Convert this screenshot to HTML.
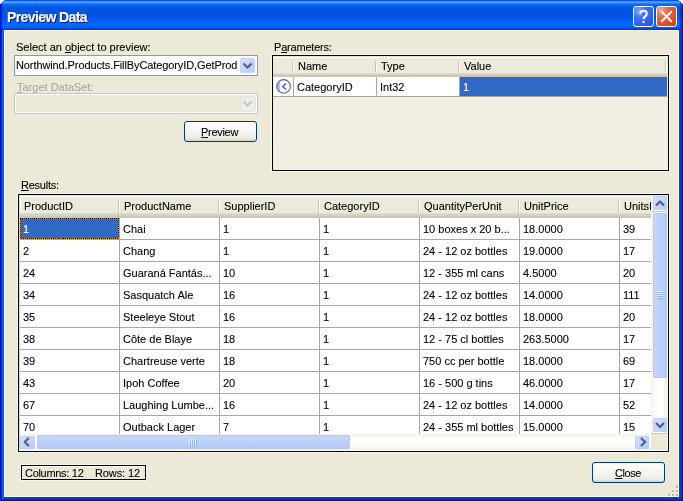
<!DOCTYPE html>
<html><head><meta charset="utf-8"><style>
html,body{margin:0;padding:0;}
body{width:683px;height:501px;overflow:hidden;background:#fff;position:relative;font-family:"Liberation Sans", sans-serif;font-size:11px;color:#000;}
.t{position:absolute;white-space:nowrap;will-change:transform;-webkit-text-stroke:0.1px currentColor;font-family:"Liberation Sans", sans-serif;font-size:11px;}
.u{text-decoration:underline;text-underline-offset:1px;}
</style></head><body>

<div style="position:absolute;left:0px;top:0px;width:683px;height:501px;border-radius:7px 7px 0 0;overflow:hidden;background:#0040E0;"></div>
<div style="position:absolute;left:0px;top:0px;width:683px;height:30px;border-radius:7px 7px 0 0;background:linear-gradient(to bottom,#0A52E6 0px, #0A52E6 1px,#3A8DFF 1px, #3A8DFF 2px,#4FA0FF 2px, #4FA0FF 3px,#1E7DFF 3px, #1E7DFF 4px,#0A6DF8 4px, #0A6DF8 5px,#0664F0 5px, #0664F0 6px,#035DE8 6px, #035DE8 7px,#0057E2 7px, #0057E2 8px,#0055E0 8px, #0055E0 9px,#0055E0 9px, #0055E0 10px,#0054DF 10px, #0054DF 11px,#0054DF 11px, #0054DF 12px,#0054DF 12px, #0054DF 13px,#0054DF 13px, #0054DF 14px,#0054DF 14px, #0054DF 15px,#0055E0 15px, #0055E0 16px,#0056E4 16px, #0056E4 17px,#0057E8 17px, #0057E8 18px,#0058EA 18px, #0058EA 19px,#005CF0 19px, #005CF0 20px,#0060F5 20px, #0060F5 21px,#0064FA 21px, #0064FA 22px,#0066FF 22px, #0066FF 23px,#0066FF 23px, #0066FF 24px,#0067FF 24px, #0067FF 25px,#0066FF 25px, #0066FF 26px,#0064FC 26px, #0064FC 27px,#005EF5 27px, #005EF5 28px,#0048E0 28px, #0048E0 29px,#003CCC 29px, #003CCC 30px);"></div>
<div style="position:absolute;left:0px;top:30px;width:1px;height:471px;background:#0012CF;"></div>
<div style="position:absolute;left:1px;top:30px;width:1px;height:471px;background:#001CD8;"></div>
<div style="position:absolute;left:2px;top:30px;width:1px;height:471px;background:#166EF0;"></div>
<div style="position:absolute;left:3px;top:30px;width:1px;height:471px;background:#0050E0;"></div>
<div style="position:absolute;left:0px;top:4px;width:1px;height:26px;background:#0018C8;"></div>
<div style="position:absolute;left:1px;top:3px;width:1px;height:27px;background:rgba(0,20,190,0.5);"></div>
<div style="position:absolute;left:2px;top:2px;width:1px;height:28px;background:rgba(0,20,190,0.2);"></div>
<div style="position:absolute;left:682px;top:4px;width:1px;height:26px;background:#001890;"></div>
<div style="position:absolute;left:681px;top:3px;width:1px;height:27px;background:rgba(0,20,160,0.6);"></div>
<div style="position:absolute;left:680px;top:2px;width:1px;height:28px;background:rgba(0,20,170,0.3);"></div>
<div style="position:absolute;left:679px;top:30px;width:1px;height:471px;background:#0044FF;"></div>
<div style="position:absolute;left:680px;top:30px;width:1px;height:471px;background:#0040E8;"></div>
<div style="position:absolute;left:681px;top:30px;width:1px;height:471px;background:#0030B8;"></div>
<div style="position:absolute;left:682px;top:30px;width:1px;height:471px;background:#001A8C;"></div>
<div style="position:absolute;left:4px;top:497px;width:675px;height:1px;background:#0040F0;"></div>
<div style="position:absolute;left:3px;top:498px;width:677px;height:1px;background:#003ED8;"></div>
<div style="position:absolute;left:2px;top:499px;width:679px;height:1px;background:#0028B0;"></div>
<div style="position:absolute;left:1px;top:500px;width:681px;height:1px;background:#001A8C;"></div>
<div style="position:absolute;left:4px;top:30px;width:675px;height:467px;background:#ECE9D8;box-shadow:inset 0 0 0 1px #FFF6DE;"></div>
<div class="t" style="left:7px;top:9px;line-height:16px;font-weight:bold;font-size:14px;letter-spacing:-0.6px;color:#fff;text-shadow:1px 1px 0 #0A1E7A;">Preview Data</div>
<div style="position:absolute;left:633px;top:6px;width:19px;height:19px;border:1px solid #fff;border-radius:3px;background:radial-gradient(circle at 25% 20%, #7FA6FF 0%, #3C70F2 35%, #2F5FE6 70%, #2350D8 100%);"></div>
<svg style="position:absolute;left:633px;top:6px" width="21" height="21"><path d="M7.2 8.2 C7.2 5.8 8.6 4.8 10.5 4.8 C12.4 4.8 13.8 5.9 13.8 7.8 C13.8 9.6 12.6 10.2 11.6 10.9 C10.8 11.5 10.5 12 10.5 13.2" stroke="#fff" stroke-width="2" fill="none"/><rect x="9.5" y="15" width="2" height="2" fill="#fff"/></svg>
<div style="position:absolute;left:656px;top:6px;width:19px;height:19px;border:1px solid #fff;border-radius:3px;background:radial-gradient(circle at 20% 15%, #F3A58A 0%, #E4653F 35%, #D9512A 70%, #C23D18 100%);"></div>
<svg style="position:absolute;left:656px;top:6px" width="21" height="21"><path d="M6 6 L15 15 M15 6 L6 15" stroke="#fff" stroke-width="2" stroke-linecap="square"/></svg>
<div class="t" style="left:16px;top:41px;line-height:13px;">Select an <span class="u">o</span>bject to preview:</div>
<div style="position:absolute;left:14px;top:55px;width:242px;height:19px;border:1px solid #7F9DB9;background:#fff;"></div>
<div class="t" style="left:16px;top:59px;line-height:13px;width:222px;overflow:hidden;letter-spacing:-0.1px;">Northwind.Products.FillByCategoryID,GetProd</div>
<div style="position:absolute;left:240px;top:58px;width:13px;height:13px;border:1px solid #C3D3FD;border-radius:2px;background:linear-gradient(to bottom right,#D6E1FD,#B7CCFA);"></div>
<svg style="position:absolute;left:240px;top:58px" width="15" height="15"><path d="M3.5 5.5 L7.5 9.5 L11.5 5.5" stroke="#4D6185" stroke-width="2.2" fill="none"/></svg>
<div class="t" style="left:17px;top:81px;line-height:13px;color:#ACA899;"><span class="u">T</span>arget DataSet:</div>
<div style="position:absolute;left:14px;top:93px;width:242px;height:19px;border:1px solid #C9C7BA;background:#ECE9D8;box-shadow:inset 0 0 0 1px #FFFFFF;"></div>
<div style="position:absolute;left:240px;top:96px;width:13px;height:13px;border:1px solid #E6E5DE;border-radius:2px;background:#EEEDE5;"></div>
<svg style="position:absolute;left:240px;top:96px" width="15" height="15"><path d="M3.5 5.5 L7.5 9.5 L11.5 5.5" stroke="#C9C7BA" stroke-width="2.2" fill="none"/></svg>
<div style="position:absolute;left:184px;top:121px;width:71px;height:19px;border:1px solid #003C74;border-radius:3px;background:linear-gradient(to bottom,#FFFFFF 0%,#F5F4EF 50%,#ECEBE6 85%,#D6D0C5 100%);"></div>
<div class="t" style="left:201px;top:126px;line-height:13px;letter-spacing:-0.3px;"><span class="u">P</span>review</div>
<div class="t" style="left:274px;top:41px;line-height:13px;letter-spacing:-0.2px;">P<span class="u">a</span>rameters:</div>
<div style="position:absolute;left:272px;top:55px;width:395px;height:114px;border:1px solid #000;background:#F1EFE2;box-shadow:0 0 0 1px #F9F7EC;"></div>
<div style="position:absolute;left:273px;top:56px;width:394px;height:21px;background:linear-gradient(to bottom,#E4E1D2 0,#E4E1D2 1px,#FFFFFF 1px,#FFFFFF 2px,#EBEADB 2px,#EBEADB 17px,#E2DECD 17px,#E2DECD 18px,#D6D2C2 18px,#D6D2C2 19px,#CBC7B8 19px,#CBC7B8 21px);"></div>
<div style="position:absolute;left:292px;top:61px;width:1px;height:11px;background:#C7C5B2;"></div>
<div style="position:absolute;left:293px;top:61px;width:1px;height:11px;background:#FFFFFF;"></div>
<div style="position:absolute;left:375px;top:61px;width:1px;height:11px;background:#C7C5B2;"></div>
<div style="position:absolute;left:376px;top:61px;width:1px;height:11px;background:#FFFFFF;"></div>
<div style="position:absolute;left:458px;top:61px;width:1px;height:11px;background:#C7C5B2;"></div>
<div style="position:absolute;left:459px;top:61px;width:1px;height:11px;background:#FFFFFF;"></div>
<div style="position:absolute;left:665px;top:61px;width:1px;height:11px;background:#C7C5B2;"></div>
<div style="position:absolute;left:666px;top:61px;width:1px;height:11px;background:#FFFFFF;"></div>
<div class="t" style="left:298px;top:60px;line-height:13px;">Name</div>
<div class="t" style="left:381px;top:60px;line-height:13px;">Type</div>
<div class="t" style="left:464px;top:60px;line-height:13px;">Value</div>
<div style="position:absolute;left:274px;top:77px;width:393px;height:19px;background:#fff;"></div>
<div style="position:absolute;left:273px;top:96px;width:394px;height:1px;background:#ACA899;"></div>
<div style="position:absolute;left:293px;top:77px;width:1px;height:20px;background:#ACA899;"></div>
<div style="position:absolute;left:376px;top:77px;width:1px;height:20px;background:#ACA899;"></div>
<div style="position:absolute;left:459px;top:77px;width:1px;height:20px;background:#ACA899;"></div>
<div style="position:absolute;left:460px;top:77px;width:207px;height:19px;background:#316AC5;"></div>
<svg style="position:absolute;left:274px;top:77px" width="19" height="19"><path d="M6 3.4 A7 7 0 0 0 6 15.6 Z" fill="#BDBDD6"/><circle cx="9.6" cy="9.4" r="6.8" fill="none" stroke="#5E5E9C" stroke-width="1.1"/><path d="M12 6.5 L8.6 9.5 L12 12.6" stroke="#4050C0" stroke-width="1.3" fill="none"/></svg>
<div class="t" style="left:297px;top:81px;line-height:13px;">CategoryID</div>
<div class="t" style="left:380px;top:81px;line-height:13px;">Int32</div>
<div class="t" style="left:463px;top:81px;line-height:13px;color:#fff;">1</div>
<div class="t" style="left:21px;top:179px;line-height:13px;letter-spacing:-0.25px;"><span class="u">R</span>esults:</div>
<div style="position:absolute;left:18px;top:194px;width:649px;height:256px;border:1px solid #000;background:#F1EFE2;box-shadow:0 0 0 1px #F9F7EC;"></div>
<div style="position:absolute;left:19px;top:195px;width:648px;height:23px;background:linear-gradient(to bottom,#E4E1D2 0,#E4E1D2 1px,#FFFFFF 1px,#FFFFFF 2px,#EBEADB 2px,#EBEADB 18px,#E2DECD 18px,#E2DECD 19px,#D6D2C2 19px,#D6D2C2 21px,#CBC7B8 21px,#CBC7B8 23px);"></div>
<div style="position:absolute;left:19px;top:195px;width:1px;height:256px;background:#DCD9CB;"></div>
<div style="position:absolute;left:20px;top:196px;width:1px;height:17px;background:#FFFFFF;"></div>
<div class="t" style="left:24px;top:200px;line-height:13px;width:94px;overflow:hidden;">ProductID</div>
<div style="position:absolute;left:118px;top:200px;width:1px;height:13px;background:#C7C5B2;"></div>
<div style="position:absolute;left:119px;top:200px;width:1px;height:13px;background:#FFFFFF;"></div>
<div class="t" style="left:124px;top:200px;line-height:13px;width:94px;overflow:hidden;">ProductName</div>
<div style="position:absolute;left:218px;top:200px;width:1px;height:13px;background:#C7C5B2;"></div>
<div style="position:absolute;left:219px;top:200px;width:1px;height:13px;background:#FFFFFF;"></div>
<div class="t" style="left:224px;top:200px;line-height:13px;width:94px;overflow:hidden;">SupplierID</div>
<div style="position:absolute;left:318px;top:200px;width:1px;height:13px;background:#C7C5B2;"></div>
<div style="position:absolute;left:319px;top:200px;width:1px;height:13px;background:#FFFFFF;"></div>
<div class="t" style="left:324px;top:200px;line-height:13px;width:94px;overflow:hidden;">CategoryID</div>
<div style="position:absolute;left:418px;top:200px;width:1px;height:13px;background:#C7C5B2;"></div>
<div style="position:absolute;left:419px;top:200px;width:1px;height:13px;background:#FFFFFF;"></div>
<div class="t" style="left:424px;top:200px;line-height:13px;width:94px;overflow:hidden;">QuantityPerUnit</div>
<div style="position:absolute;left:518px;top:200px;width:1px;height:13px;background:#C7C5B2;"></div>
<div style="position:absolute;left:519px;top:200px;width:1px;height:13px;background:#FFFFFF;"></div>
<div class="t" style="left:524px;top:200px;line-height:13px;width:94px;overflow:hidden;">UnitPrice</div>
<div style="position:absolute;left:618px;top:200px;width:1px;height:13px;background:#C7C5B2;"></div>
<div style="position:absolute;left:619px;top:200px;width:1px;height:13px;background:#FFFFFF;"></div>
<div class="t" style="left:624px;top:200px;line-height:13px;width:27px;overflow:hidden;">UnitsInStock</div>
<div style="position:absolute;left:20px;top:218px;width:631px;height:216px;background:#fff;overflow:hidden;"></div>
<div style="position:absolute;left:20px;top:239px;width:631px;height:1px;background:#ACA899;"></div>
<div style="position:absolute;left:20px;top:218px;width:99px;height:21px;background:#316AC5;"></div>
<svg style="position:absolute;left:20px;top:218px" width="99" height="21" shape-rendering="crispEdges"><rect x="0.5" y="0.5" width="98" height="20" fill="none" stroke="#000" stroke-width="1"/><rect x="0.5" y="0.5" width="98" height="20" fill="none" stroke="#CE953A" stroke-width="1" stroke-dasharray="1 1"/></svg>
<div class="t" style="left:23px;top:223px;line-height:13px;color:#fff;width:95px;overflow:hidden;">1</div>
<div class="t" style="left:123px;top:223px;line-height:13px;color:#000;width:95px;overflow:hidden;">Chai</div>
<div class="t" style="left:223px;top:223px;line-height:13px;color:#000;width:95px;overflow:hidden;">1</div>
<div class="t" style="left:323px;top:223px;line-height:13px;color:#000;width:95px;overflow:hidden;">1</div>
<div class="t" style="left:423px;top:223px;line-height:13px;color:#000;width:95px;overflow:hidden;">10 boxes x 20 b...</div>
<div class="t" style="left:523px;top:223px;line-height:13px;color:#000;width:95px;overflow:hidden;">18.0000</div>
<div class="t" style="left:623px;top:223px;line-height:13px;color:#000;width:27px;overflow:hidden;">39</div>
<div style="position:absolute;left:20px;top:261px;width:631px;height:1px;background:#ACA899;"></div>
<div class="t" style="left:23px;top:245px;line-height:13px;color:#000;width:95px;overflow:hidden;">2</div>
<div class="t" style="left:123px;top:245px;line-height:13px;color:#000;width:95px;overflow:hidden;">Chang</div>
<div class="t" style="left:223px;top:245px;line-height:13px;color:#000;width:95px;overflow:hidden;">1</div>
<div class="t" style="left:323px;top:245px;line-height:13px;color:#000;width:95px;overflow:hidden;">1</div>
<div class="t" style="left:423px;top:245px;line-height:13px;color:#000;width:95px;overflow:hidden;">24 - 12 oz bottles</div>
<div class="t" style="left:523px;top:245px;line-height:13px;color:#000;width:95px;overflow:hidden;">19.0000</div>
<div class="t" style="left:623px;top:245px;line-height:13px;color:#000;width:27px;overflow:hidden;">17</div>
<div style="position:absolute;left:20px;top:283px;width:631px;height:1px;background:#ACA899;"></div>
<div class="t" style="left:23px;top:267px;line-height:13px;color:#000;width:95px;overflow:hidden;">24</div>
<div class="t" style="left:123px;top:267px;line-height:13px;color:#000;width:95px;overflow:hidden;">Guaran&aacute; Fant&aacute;s...</div>
<div class="t" style="left:223px;top:267px;line-height:13px;color:#000;width:95px;overflow:hidden;">10</div>
<div class="t" style="left:323px;top:267px;line-height:13px;color:#000;width:95px;overflow:hidden;">1</div>
<div class="t" style="left:423px;top:267px;line-height:13px;color:#000;width:95px;overflow:hidden;">12 - 355 ml cans</div>
<div class="t" style="left:523px;top:267px;line-height:13px;color:#000;width:95px;overflow:hidden;">4.5000</div>
<div class="t" style="left:623px;top:267px;line-height:13px;color:#000;width:27px;overflow:hidden;">20</div>
<div style="position:absolute;left:20px;top:305px;width:631px;height:1px;background:#ACA899;"></div>
<div class="t" style="left:23px;top:289px;line-height:13px;color:#000;width:95px;overflow:hidden;">34</div>
<div class="t" style="left:123px;top:289px;line-height:13px;color:#000;width:95px;overflow:hidden;">Sasquatch Ale</div>
<div class="t" style="left:223px;top:289px;line-height:13px;color:#000;width:95px;overflow:hidden;">16</div>
<div class="t" style="left:323px;top:289px;line-height:13px;color:#000;width:95px;overflow:hidden;">1</div>
<div class="t" style="left:423px;top:289px;line-height:13px;color:#000;width:95px;overflow:hidden;">24 - 12 oz bottles</div>
<div class="t" style="left:523px;top:289px;line-height:13px;color:#000;width:95px;overflow:hidden;">14.0000</div>
<div class="t" style="left:623px;top:289px;line-height:13px;color:#000;width:27px;overflow:hidden;">111</div>
<div style="position:absolute;left:20px;top:327px;width:631px;height:1px;background:#ACA899;"></div>
<div class="t" style="left:23px;top:311px;line-height:13px;color:#000;width:95px;overflow:hidden;">35</div>
<div class="t" style="left:123px;top:311px;line-height:13px;color:#000;width:95px;overflow:hidden;">Steeleye Stout</div>
<div class="t" style="left:223px;top:311px;line-height:13px;color:#000;width:95px;overflow:hidden;">16</div>
<div class="t" style="left:323px;top:311px;line-height:13px;color:#000;width:95px;overflow:hidden;">1</div>
<div class="t" style="left:423px;top:311px;line-height:13px;color:#000;width:95px;overflow:hidden;">24 - 12 oz bottles</div>
<div class="t" style="left:523px;top:311px;line-height:13px;color:#000;width:95px;overflow:hidden;">18.0000</div>
<div class="t" style="left:623px;top:311px;line-height:13px;color:#000;width:27px;overflow:hidden;">20</div>
<div style="position:absolute;left:20px;top:349px;width:631px;height:1px;background:#ACA899;"></div>
<div class="t" style="left:23px;top:333px;line-height:13px;color:#000;width:95px;overflow:hidden;">38</div>
<div class="t" style="left:123px;top:333px;line-height:13px;color:#000;width:95px;overflow:hidden;">C&ocirc;te de Blaye</div>
<div class="t" style="left:223px;top:333px;line-height:13px;color:#000;width:95px;overflow:hidden;">18</div>
<div class="t" style="left:323px;top:333px;line-height:13px;color:#000;width:95px;overflow:hidden;">1</div>
<div class="t" style="left:423px;top:333px;line-height:13px;color:#000;width:95px;overflow:hidden;">12 - 75 cl bottles</div>
<div class="t" style="left:523px;top:333px;line-height:13px;color:#000;width:95px;overflow:hidden;">263.5000</div>
<div class="t" style="left:623px;top:333px;line-height:13px;color:#000;width:27px;overflow:hidden;">17</div>
<div style="position:absolute;left:20px;top:371px;width:631px;height:1px;background:#ACA899;"></div>
<div class="t" style="left:23px;top:355px;line-height:13px;color:#000;width:95px;overflow:hidden;">39</div>
<div class="t" style="left:123px;top:355px;line-height:13px;color:#000;width:95px;overflow:hidden;">Chartreuse verte</div>
<div class="t" style="left:223px;top:355px;line-height:13px;color:#000;width:95px;overflow:hidden;">18</div>
<div class="t" style="left:323px;top:355px;line-height:13px;color:#000;width:95px;overflow:hidden;">1</div>
<div class="t" style="left:423px;top:355px;line-height:13px;color:#000;width:95px;overflow:hidden;">750 cc per bottle</div>
<div class="t" style="left:523px;top:355px;line-height:13px;color:#000;width:95px;overflow:hidden;">18.0000</div>
<div class="t" style="left:623px;top:355px;line-height:13px;color:#000;width:27px;overflow:hidden;">69</div>
<div style="position:absolute;left:20px;top:393px;width:631px;height:1px;background:#ACA899;"></div>
<div class="t" style="left:23px;top:377px;line-height:13px;color:#000;width:95px;overflow:hidden;">43</div>
<div class="t" style="left:123px;top:377px;line-height:13px;color:#000;width:95px;overflow:hidden;">Ipoh Coffee</div>
<div class="t" style="left:223px;top:377px;line-height:13px;color:#000;width:95px;overflow:hidden;">20</div>
<div class="t" style="left:323px;top:377px;line-height:13px;color:#000;width:95px;overflow:hidden;">1</div>
<div class="t" style="left:423px;top:377px;line-height:13px;color:#000;width:95px;overflow:hidden;">16 - 500 g tins</div>
<div class="t" style="left:523px;top:377px;line-height:13px;color:#000;width:95px;overflow:hidden;">46.0000</div>
<div class="t" style="left:623px;top:377px;line-height:13px;color:#000;width:27px;overflow:hidden;">17</div>
<div style="position:absolute;left:20px;top:415px;width:631px;height:1px;background:#ACA899;"></div>
<div class="t" style="left:23px;top:399px;line-height:13px;color:#000;width:95px;overflow:hidden;">67</div>
<div class="t" style="left:123px;top:399px;line-height:13px;color:#000;width:95px;overflow:hidden;">Laughing Lumbe...</div>
<div class="t" style="left:223px;top:399px;line-height:13px;color:#000;width:95px;overflow:hidden;">16</div>
<div class="t" style="left:323px;top:399px;line-height:13px;color:#000;width:95px;overflow:hidden;">1</div>
<div class="t" style="left:423px;top:399px;line-height:13px;color:#000;width:95px;overflow:hidden;">24 - 12 oz bottles</div>
<div class="t" style="left:523px;top:399px;line-height:13px;color:#000;width:95px;overflow:hidden;">14.0000</div>
<div class="t" style="left:623px;top:399px;line-height:13px;color:#000;width:27px;overflow:hidden;">52</div>
<div class="t" style="left:23px;top:421px;line-height:13px;color:#000;width:95px;overflow:hidden;">70</div>
<div class="t" style="left:123px;top:421px;line-height:13px;color:#000;width:95px;overflow:hidden;">Outback Lager</div>
<div class="t" style="left:223px;top:421px;line-height:13px;color:#000;width:95px;overflow:hidden;">7</div>
<div class="t" style="left:323px;top:421px;line-height:13px;color:#000;width:95px;overflow:hidden;">1</div>
<div class="t" style="left:423px;top:421px;line-height:13px;color:#000;width:95px;overflow:hidden;">24 - 355 ml bottles</div>
<div class="t" style="left:523px;top:421px;line-height:13px;color:#000;width:95px;overflow:hidden;">15.0000</div>
<div class="t" style="left:623px;top:421px;line-height:13px;color:#000;width:27px;overflow:hidden;">15</div>
<div style="position:absolute;left:119px;top:218px;width:1px;height:216px;background:#ACA899;"></div>
<div style="position:absolute;left:219px;top:218px;width:1px;height:216px;background:#ACA899;"></div>
<div style="position:absolute;left:319px;top:218px;width:1px;height:216px;background:#ACA899;"></div>
<div style="position:absolute;left:419px;top:218px;width:1px;height:216px;background:#ACA899;"></div>
<div style="position:absolute;left:519px;top:218px;width:1px;height:216px;background:#ACA899;"></div>
<div style="position:absolute;left:619px;top:218px;width:1px;height:216px;background:#ACA899;"></div>
<div style="position:absolute;left:651px;top:196px;width:16px;height:238px;background:linear-gradient(to right,#F3F1EC,#FEFEFB 30%,#FEFEFB 70%,#F0EEE6);"></div>
<div style="position:absolute;left:653px;top:196px;width:14px;height:14px;border-radius:2px;background:linear-gradient(135deg,#D8E3FD 0%,#C6D6FC 50%,#B2C8F8 100%);box-shadow:inset 0 0 0 1px #BDCFF8;"></div>
<svg style="position:absolute;left:652px;top:196px" width="16" height="16"><path d="M4 9.5 L8 5.5 L12 9.5" stroke="#4D6185" stroke-width="2.2" fill="none"/></svg>
<div style="position:absolute;left:652px;top:211px;width:15px;height:1px;background:#B2C6F3;"></div>
<div style="position:absolute;left:653px;top:213px;width:14px;height:165px;border-radius:2px;background:linear-gradient(to right,#C8D6FB,#BCD0FA 50%,#B4CAF8);box-shadow:inset 0 0 0 1px #B5C8F3;"></div>
<div style="position:absolute;left:657px;top:291px;width:6px;height:1px;background:#EEF2FE;"></div>
<div style="position:absolute;left:657px;top:292px;width:6px;height:1px;background:#8DB0F8;"></div>
<div style="position:absolute;left:657px;top:293px;width:6px;height:1px;background:#EEF2FE;"></div>
<div style="position:absolute;left:657px;top:294px;width:6px;height:1px;background:#8DB0F8;"></div>
<div style="position:absolute;left:657px;top:295px;width:6px;height:1px;background:#EEF2FE;"></div>
<div style="position:absolute;left:657px;top:296px;width:6px;height:1px;background:#8DB0F8;"></div>
<div style="position:absolute;left:657px;top:297px;width:6px;height:1px;background:#EEF2FE;"></div>
<div style="position:absolute;left:657px;top:298px;width:6px;height:1px;background:#8DB0F8;"></div>
<div style="position:absolute;left:653px;top:418px;width:14px;height:14px;border-radius:2px;background:linear-gradient(135deg,#D8E3FD 0%,#C6D6FC 50%,#B2C8F8 100%);box-shadow:inset 0 0 0 1px #BDCFF8;"></div>
<div style="position:absolute;left:652px;top:433px;width:15px;height:1px;background:#B2C6F3;"></div>
<svg style="position:absolute;left:652px;top:417px" width="16" height="16"><path d="M4 6 L8 10 L12 6" stroke="#4D6185" stroke-width="2.2" fill="none"/></svg>
<div style="position:absolute;left:20px;top:434px;width:631px;height:16px;background:linear-gradient(to bottom,#F3F1EC,#FEFEFB 30%,#FEFEFB 70%,#F0EEE6);"></div>
<div style="position:absolute;left:20px;top:436px;width:15px;height:13px;border-radius:2px;background:linear-gradient(135deg,#D8E3FD 0%,#C6D6FC 50%,#B2C8F8 100%);box-shadow:inset 0 0 0 1px #BDCFF8;"></div>
<svg style="position:absolute;left:20px;top:434px" width="16" height="16"><path d="M8.8 4 L4.8 8 L8.8 12" stroke="#4D6185" stroke-width="2.2" fill="none"/></svg>
<div style="position:absolute;left:37px;top:435px;width:313px;height:14px;border-radius:2px;background:linear-gradient(to bottom,#C8D8FC,#BCD0FA 50%,#B0C8F8);box-shadow:inset 0 0 0 1px #B5C8F3;"></div>
<div style="position:absolute;left:189px;top:439px;width:1px;height:6px;background:#F4F7FE;"></div>
<div style="position:absolute;left:190px;top:440px;width:1px;height:6px;background:#8DB0F8;"></div>
<div style="position:absolute;left:191px;top:439px;width:1px;height:6px;background:#F4F7FE;"></div>
<div style="position:absolute;left:192px;top:440px;width:1px;height:6px;background:#8DB0F8;"></div>
<div style="position:absolute;left:193px;top:439px;width:1px;height:6px;background:#F4F7FE;"></div>
<div style="position:absolute;left:194px;top:440px;width:1px;height:6px;background:#8DB0F8;"></div>
<div style="position:absolute;left:195px;top:439px;width:1px;height:6px;background:#F4F7FE;"></div>
<div style="position:absolute;left:196px;top:440px;width:1px;height:6px;background:#8DB0F8;"></div>
<div style="position:absolute;left:635px;top:436px;width:14px;height:13px;border-radius:2px;background:linear-gradient(135deg,#D8E3FD 0%,#C6D6FC 50%,#B2C8F8 100%);box-shadow:inset 0 0 0 1px #BDCFF8;"></div>
<svg style="position:absolute;left:635px;top:434px" width="16" height="16"><path d="M6 4 L10 8 L6 12" stroke="#4D6185" stroke-width="2.2" fill="none"/></svg>
<div style="position:absolute;left:651px;top:434px;width:16px;height:16px;background:#ECE9D8;"></div>
<div style="position:absolute;left:667px;top:195px;width:1px;height:256px;background:#fff;"></div>
<div style="position:absolute;left:19px;top:450px;width:649px;height:1px;background:#fff;"></div>
<div style="position:absolute;left:21px;top:465px;width:123px;height:13px;border:1px solid #000;box-shadow:inset 1px 1px 0 #FFFBEF,0 0 0 1px #F9F7EC;"></div>
<div class="t" style="left:25px;top:467px;line-height:13px;letter-spacing:-0.3px;">Columns: 12</div>
<div class="t" style="left:95px;top:467px;line-height:13px;letter-spacing:-0.1px;">Rows: 12</div>
<div style="position:absolute;left:592px;top:462px;width:71px;height:19px;border:1px solid #003C74;border-radius:3px;background:linear-gradient(to bottom,#FFFFFF 0%,#F5F4EF 50%,#ECEBE6 85%,#D6D0C5 100%);"></div>
<div class="t" style="left:615px;top:467px;line-height:13px;letter-spacing:-0.45px;"><span class="u">C</span>lose</div>
<div style="position:absolute;left:676px;top:486px;width:2px;height:2px;background:#B9B5A5;"></div>
<div style="position:absolute;left:678px;top:487px;width:1px;height:1px;background:#FFFFFF;"></div>
<div style="position:absolute;left:677px;top:488px;width:1px;height:1px;background:#FFFFFF;"></div>
<div style="position:absolute;left:672px;top:490px;width:2px;height:2px;background:#B9B5A5;"></div>
<div style="position:absolute;left:674px;top:491px;width:1px;height:1px;background:#FFFFFF;"></div>
<div style="position:absolute;left:673px;top:492px;width:1px;height:1px;background:#FFFFFF;"></div>
<div style="position:absolute;left:676px;top:490px;width:2px;height:2px;background:#B9B5A5;"></div>
<div style="position:absolute;left:678px;top:491px;width:1px;height:1px;background:#FFFFFF;"></div>
<div style="position:absolute;left:677px;top:492px;width:1px;height:1px;background:#FFFFFF;"></div>
<div style="position:absolute;left:668px;top:494px;width:2px;height:2px;background:#B9B5A5;"></div>
<div style="position:absolute;left:670px;top:495px;width:1px;height:1px;background:#FFFFFF;"></div>
<div style="position:absolute;left:669px;top:496px;width:1px;height:1px;background:#FFFFFF;"></div>
<div style="position:absolute;left:672px;top:494px;width:2px;height:2px;background:#B9B5A5;"></div>
<div style="position:absolute;left:674px;top:495px;width:1px;height:1px;background:#FFFFFF;"></div>
<div style="position:absolute;left:673px;top:496px;width:1px;height:1px;background:#FFFFFF;"></div>
<div style="position:absolute;left:676px;top:494px;width:2px;height:2px;background:#B9B5A5;"></div>
<div style="position:absolute;left:678px;top:495px;width:1px;height:1px;background:#FFFFFF;"></div>
<div style="position:absolute;left:677px;top:496px;width:1px;height:1px;background:#FFFFFF;"></div>
</body></html>
